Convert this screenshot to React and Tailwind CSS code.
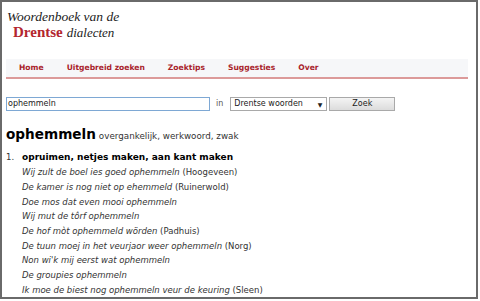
import { memo } from 'react';

const NAV_ITEMS = ['Home', 'Uitgebreid zoeken', 'Zoektips', 'Suggesties', 'Over'];

const EXAMPLES = [
  { text: 'Wij zult de boel ies goed ophemmeln', place: 'Hoogeveen' },
  { text: 'De kamer is nog niet op ehemmeld', place: 'Ruinerwold' },
  { text: 'Doe mos dat even mooi ophemmeln' },
  { text: 'Wij mut de tôrf ophemmeln' },
  { text: 'De hof mòt ophemmeld wörden', place: 'Padhuis' },
  { text: 'De tuun moej in het veurjaor weer ophemmeln', place: 'Norg' },
  { text: "Non wi'k mij eerst wat ophemmeln" },
  { text: 'De groupies ophemmeln' },
  { text: 'Ik moe de biest nog ophemmeln veur de keuring', place: 'Sleen' },
];

const sans = "font-['DejaVu_Sans','Verdana',sans-serif]";

function App() {
  return (
    <div className="h-[301px] w-[480px] overflow-hidden bg-white">
      <div className={`h-[299px] w-[478px] overflow-hidden border-2 border-[#6a6a6a] bg-white text-[#222] ${sans}`}>
        {/* Site title */}
        <div className="pl-[5px] pt-[7px] font-['Liberation_Serif',serif]">
          <div className="text-[13.5px] leading-[15px] italic">Woordenboek van de</div>
          <div className="pl-[6px] leading-[15px]">
            <span className="text-[15px] font-semibold text-[#b3262e]">Drentse</span>{' '}
            <span className="text-[13px] italic">dialecten</span>
          </div>
        </div>

        {/* Navigation */}
        <div className="ml-[4px] mt-[19px] flex h-[20px] w-[462px] items-center border-b-2 border-[#dc9a9a] bg-[#f6f7f9]">
          <nav className="flex items-center gap-[23px] pl-[13px] text-[7.6px] font-bold text-[#a8232b]">
            {NAV_ITEMS.map((item) => (
              <span key={item}>{item}</span>
            ))}
          </nav>
        </div>

        {/* Search row */}
        <div className="ml-[4px] mt-[18px] flex items-center text-[8px]">
          <div className="flex h-[14px] w-[204px] items-center border border-[#7ea8d4] bg-white pl-[1px]">
            ophemmeln
          </div>
          <span className="ml-[6px] text-[#555]">in</span>
          <div className="ml-[7px] flex h-[14px] w-[97px] items-center justify-between border border-[#a9a9a9] bg-white pl-[3px] pr-[4px]">
            <span>Drentse woorden</span>
            <span className="text-[6px]">▼</span>
          </div>
          <div className="ml-[2px] flex h-[14px] w-[66px] items-center justify-center border border-[#a9a9a9] bg-gradient-to-b from-[#f4f4f4] to-[#dcdcdc]">
            Zoek
          </div>
        </div>

        {/* Entry */}
        <div className="ml-[4px] mt-[13px]">
          <div className="flex items-baseline gap-[3px]">
            <span className="text-[13.6px] font-bold text-black">ophemmeln</span>
            <span className="text-[8.75px] text-[#333]">overgankelijk, werkwoord, zwak</span>
          </div>

          <div className="mt-[6px] flex text-[8.5px] leading-[14.7px]">
            <span className="w-[16px] text-[#333]">1.</span>
            <div>
              <div className="text-[9px] font-bold text-black">opruimen, netjes maken, aan kant maken</div>
              {EXAMPLES.map((ex) => (
                <div key={ex.text} className="text-[#333]">
                  <span className="italic">{ex.text}</span>
                  {ex.place && <span> ({ex.place})</span>}
                </div>
              ))}
            </div>
          </div>
        </div>
      </div>
    </div>
  );
}

export default memo(App);
